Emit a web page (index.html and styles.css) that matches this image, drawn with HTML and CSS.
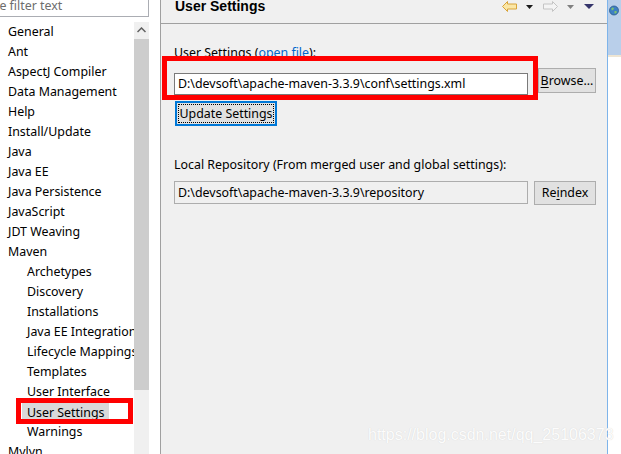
FILE: index.html
```html
<!DOCTYPE html>
<html>
<head>
<meta charset="utf-8">
<title>Preferences - User Settings</title>
<link rel="stylesheet" href="styles.css">
</head>
<body>
<div class="app">
  <div class="left">
    <div class="filter"><span class="filter-text">type filter text</span></div>
    <div class="tree-wrap">
      <ul class="tree">
        <li>General</li>
        <li>Ant</li>
        <li>AspectJ Compiler</li>
        <li>Data Management</li>
        <li>Help</li>
        <li>Install/Update</li>
        <li>Java</li>
        <li>Java EE</li>
        <li>Java Persistence</li>
        <li>JavaScript</li>
        <li>JDT Weaving</li>
        <li>Maven</li>
        <li class="child">Archetypes</li>
        <li class="child">Discovery</li>
        <li class="child">Installations</li>
        <li class="child">Java EE Integration</li>
        <li class="child">Lifecycle Mappings</li>
        <li class="child">Templates</li>
        <li class="child">User Interface</li>
        <li class="child selected"><span class="sel">User Settings</span></li>
        <li class="child">Warnings</li>
        <li>Mylyn</li>
      </ul>
      <div class="scrollbar">
        <div class="sb-up">
          <svg width="9" height="6" viewBox="0 0 9 6"><polyline points="0.5,5 4.5,1 8.5,5" fill="none" stroke="#606060" stroke-width="1.5"/></svg>
        </div>
        <div class="sb-thumb"></div>
      </div>
    </div>
  </div>

  <div class="right">
    <div class="title-row">
      <h1 class="title">User Settings</h1>
      <div class="toolbar">
        <svg class="tb-arrow" width="15" height="11" viewBox="0 0 15 11">
          <path d="M0.5,5.5 L5.5,0.5 L5.5,3 L14.5,3 L14.5,8 L5.5,8 L5.5,10.5 Z" fill="#fbe7a6" stroke="#d8a43a" stroke-width="1"/>
        </svg>
        <svg class="tb-drop" width="7" height="4" viewBox="0 0 7 4"><path d="M0,0 L7,0 L3.5,4 Z" fill="#1a1a1a"/></svg>
        <svg class="tb-arrow fwd" width="15" height="11" viewBox="0 0 15 11">
          <path d="M14.5,5.5 L9.5,0.5 L9.5,3 L0.5,3 L0.5,8 L9.5,8 L9.5,10.5 Z" fill="#f4f4f4" stroke="#c4c4c4" stroke-width="1"/>
        </svg>
        <svg class="tb-drop gray" width="7" height="4" viewBox="0 0 7 4"><path d="M0,0 L7,0 L3.5,4 Z" fill="#808080"/></svg>
        <svg class="tb-menu" width="10" height="5" viewBox="0 0 10 5"><path d="M0,0 L10,0 L5,5 Z" fill="#35356b"/></svg>
      </div>
    </div>

    <div class="content">
      <div class="label">User Settings (<span class="link">open file</span>):</div>
      <div class="row row-settings">
        <div class="field">D:\devsoft\apache-maven-3.3.9\conf\settings.xml</div>
        <button class="btn btn-browse"><u>B</u>rowse...</button>
      </div>
      <button class="btn btn-update">Update Settings</button>

      <div class="label label-local">Local Repository (From merged user and global settings):</div>
      <div class="row row-repo">
        <div class="field readonly">D:\devsoft\apache-maven-3.3.9\repository</div>
        <button class="btn btn-reindex">Re<u>i</u>ndex</button>
      </div>
    </div>
  </div>

  <div class="rstrip">
    <div class="rstrip-top">
      <svg class="globe" width="10" height="11" viewBox="0 0 10 11">
        <circle cx="5" cy="5.5" r="4.5" fill="#3d7fc4" stroke="#2a5a8c" stroke-width="0.8"/>
        <path d="M2.5,3 Q4,2 5,3.5 Q4.5,5 3,5.5 Q2,4.5 2.5,3 Z" fill="#7cc36a"/>
        <path d="M5.5,6 Q7.5,5.5 8,7 Q7,9 5.5,8.5 Z" fill="#7cc36a"/>
      </svg>
    </div>
    <div class="rstrip-line"></div>
  </div>

  <div class="annot annot-field"></div>
  <div class="annot annot-tree"></div>
  <div class="watermark">https://blog.csdn.net/qq_25106373</div>
</div>
</body>
</html>
```

FILE: styles.css
```css
html, body {
  margin: 0;
  padding: 0;
  background: #ffffff;
}

.app {
  position: relative;
  width: 621px;
  height: 454px;
  overflow: hidden;
  display: flex;
  font-family: "Noto Sans", "Open Sans", sans-serif;
  font-size: 12.4px;
  color: #000;
}

/* ---------- left pane ---------- */
.left {
  width: 160px;
  flex: none;
  background: #ffffff;
  display: flex;
  flex-direction: column;
}

.filter {
  width: 148px;
  height: 16px;
  border-right: 1px solid #abadb3;
  border-bottom: 1px solid #abadb3;
  overflow: hidden;
  white-space: nowrap;
  line-height: 11px;
  color: #6d6d6d;
}

.filter-text {
  display: block;
  margin-left: -19px;
}

.tree-wrap {
  flex: 1;
  display: flex;
  margin-top: 4px;
  min-height: 0;
}

.tree {
  list-style: none;
  margin: 1px 0 0 0;
  padding: 0;
  width: 134px;
  flex: none;
  overflow: hidden;
  white-space: nowrap;
}

.tree li {
  height: 20px;
  line-height: 20px;
  padding-left: 8px;
}

.tree li.child {
  padding-left: 27px;
}

.tree li.selected {
  padding-left: 22px;
}

.sel {
  display: inline-block;
  height: 18px;
  line-height: 20px;
  margin-top: 1px;
  vertical-align: top;
  padding: 0 5px;
  background: #d9d9d9;
}

.scrollbar {
  width: 15px;
  flex: none;
  margin-top: 1px;
  background: #f0f0f0;
  display: flex;
  flex-direction: column;
}

.sb-up {
  height: 17px;
  display: flex;
  align-items: center;
  justify-content: center;
}

.sb-up svg {
  margin-top: -2px;
}

.sb-thumb {
  height: 351px;
  background: #cdcdcd;
}

/* ---------- right pane ---------- */
.right {
  width: 446px;
  flex: none;
  background: #f0f0f0;
  border-left: 1px solid #a0a0a0;
  display: flex;
  flex-direction: column;
}

.title-row {
  height: 23px;
  border-bottom: 1px solid #a0a0a0;
  display: flex;
  align-items: flex-start;
  padding: 0 13px 0 14px;
}

.title {
  margin: 0;
  font-family: "Liberation Sans", Arial, sans-serif;
  font-weight: bold;
  font-size: 14px;
  line-height: 13px;
  color: #000;
}

.toolbar {
  margin-left: auto;
  display: flex;
  align-items: flex-start;
}

.tb-arrow {
  margin-top: 1px;
}

.tb-drop {
  margin-top: 5px;
  margin-left: 9px;
  margin-right: 10px;
}

.tb-menu {
  margin-top: 4px;
}

.content {
  padding: 21px 11px 0 13px;
  display: flex;
  flex-direction: column;
  align-items: flex-start;
}

.label {
  line-height: 16px;
  height: 16px;
  white-space: nowrap;
}

.link {
  color: #0066cc;
}

.label-local {
  margin-top: 31px;
}

.row {
  display: flex;
  align-items: flex-start;
  width: 422px;
}

.row-settings {
  margin-top: 7px;
}

.row-repo {
  margin-top: 8px;
}

.field {
  box-sizing: border-box;
  width: 354px;
  height: 22px;
  line-height: 20px;
  padding-left: 3px;
  border: 1px solid #7a7a7a;
  background: #ffffff;
  white-space: nowrap;
  overflow: hidden;
}

.row-settings .field {
  margin-top: 5px;
}

.field.readonly {
  height: 23px;
  line-height: 21px;
  background: #f0f0f0;
  border-color: #adadad;
}

.btn {
  box-sizing: border-box;
  margin: 0;
  padding: 0;
  height: 25px;
  font-family: inherit;
  font-size: 12.4px;
  color: #000;
  background: #e1e1e1;
  border: 1px solid #adadad;
  line-height: 22px;
  white-space: nowrap;
}

.btn u {
  text-underline-offset: 2px;
}

.btn-browse {
  width: 58px;
  margin-left: auto;
}

.btn-reindex {
  width: 62px;
  height: 24px;
  margin-left: auto;
}

.btn-update {
  margin-top: 6px;
  margin-left: 1px;
  width: 102px;
  border: 1px solid #0078d7;
  box-shadow: inset 0 0 0 1px #0078d7;
  outline: 1px dotted #000;
  outline-offset: -4px;
}

/* ---------- right strip ---------- */
.rstrip {
  width: 13px;
  flex: none;
  border-left: 1px solid #7eb4ea;
  background: #ffffff;
  display: flex;
  flex-direction: column;
}

.rstrip-top {
  height: 55px;
  background: #b9cfea;
}

.rstrip-line {
  height: 2px;
  background: #eee5d3;
}

.globe {
  display: block;
  margin: 5px 0 0 1px;
}

/* ---------- annotations ---------- */
.annot {
  position: absolute;
  box-sizing: border-box;
  border: 5px solid #ff0000;
}

.annot-field {
  left: 162px;
  top: 56px;
  width: 376px;
  height: 44px;
}

.annot-tree {
  left: 16px;
  top: 398px;
  width: 117px;
  height: 26px;
}

.watermark {
  position: absolute;
  left: 368px;
  top: 427px;
  font-family: "Liberation Sans", Arial, sans-serif;
  font-size: 16px;
  line-height: 16px;
  color: rgba(255, 255, 255, 0.95);
  text-shadow: 0 0 1px #d0d0d0;
  white-space: nowrap;
}
```
